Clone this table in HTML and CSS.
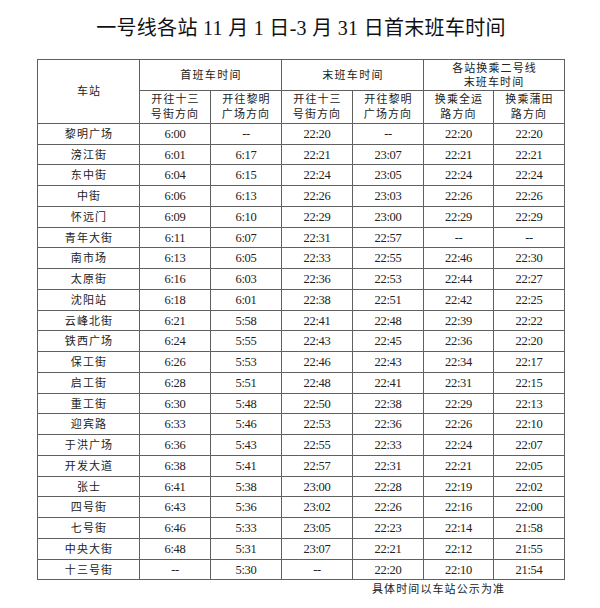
FILE: index.html
```html
<!DOCTYPE html>
<html lang="zh-CN">
<head>
<meta charset="utf-8">
<title>一号线各站首末班车时间</title>
<link rel="stylesheet" href="styles.css">
</head>
<body>
<div class="page">
  <div class="title">一号线各站 11 月 1 日-3 月 31 日首末班车时间</div>
  <table class="timetable">
    <colgroup>
      <col class="c-station"><col class="c-t"><col class="c-t"><col class="c-t"><col class="c-t"><col class="c-t6"><col class="c-t">
    </colgroup>
    <thead>
      <tr class="h1">
        <th rowspan="2" class="cjk">车站</th>
        <th colspan="2" class="cjk wide">首班车时间</th>
        <th colspan="2" class="cjk wide">末班车时间</th>
        <th colspan="2" class="cjk two">各站换乘二号线<br>末班车时间</th>
      </tr>
      <tr class="h2">
        <th class="cjk sub">开往十三<br>号街方向</th>
        <th class="cjk sub">开往黎明<br>广场方向</th>
        <th class="cjk sub">开往十三<br>号街方向</th>
        <th class="cjk sub">开往黎明<br>广场方向</th>
        <th class="cjk sub">换乘全运<br>路方向</th>
        <th class="cjk sub">换乘蒲田<br>路方向</th>
      </tr>
    </thead>
    <tbody>
      <tr><td class="cjk">黎明广场</td><td>6:00</td><td>--</td><td>22:20</td><td>--</td><td>22:20</td><td>22:20</td></tr>
      <tr><td class="cjk">滂江街</td><td>6:01</td><td>6:17</td><td>22:21</td><td>23:07</td><td>22:21</td><td>22:21</td></tr>
      <tr><td class="cjk">东中街</td><td>6:04</td><td>6:15</td><td>22:24</td><td>23:05</td><td>22:24</td><td>22:24</td></tr>
      <tr><td class="cjk">中街</td><td>6:06</td><td>6:13</td><td>22:26</td><td>23:03</td><td>22:26</td><td>22:26</td></tr>
      <tr><td class="cjk">怀远门</td><td>6:09</td><td>6:10</td><td>22:29</td><td>23:00</td><td>22:29</td><td>22:29</td></tr>
      <tr><td class="cjk">青年大街</td><td>6:11</td><td>6:07</td><td>22:31</td><td>22:57</td><td>--</td><td>--</td></tr>
      <tr><td class="cjk">南市场</td><td>6:13</td><td>6:05</td><td>22:33</td><td>22:55</td><td>22:46</td><td>22:30</td></tr>
      <tr><td class="cjk">太原街</td><td>6:16</td><td>6:03</td><td>22:36</td><td>22:53</td><td>22:44</td><td>22:27</td></tr>
      <tr><td class="cjk">沈阳站</td><td>6:18</td><td>6:01</td><td>22:38</td><td>22:51</td><td>22:42</td><td>22:25</td></tr>
      <tr><td class="cjk">云峰北街</td><td>6:21</td><td>5:58</td><td>22:41</td><td>22:48</td><td>22:39</td><td>22:22</td></tr>
      <tr><td class="cjk">铁西广场</td><td>6:24</td><td>5:55</td><td>22:43</td><td>22:45</td><td>22:36</td><td>22:20</td></tr>
      <tr><td class="cjk">保工街</td><td>6:26</td><td>5:53</td><td>22:46</td><td>22:43</td><td>22:34</td><td>22:17</td></tr>
      <tr><td class="cjk">启工街</td><td>6:28</td><td>5:51</td><td>22:48</td><td>22:41</td><td>22:31</td><td>22:15</td></tr>
      <tr><td class="cjk">重工街</td><td>6:30</td><td>5:48</td><td>22:50</td><td>22:38</td><td>22:29</td><td>22:13</td></tr>
      <tr><td class="cjk">迎宾路</td><td>6:33</td><td>5:46</td><td>22:53</td><td>22:36</td><td>22:26</td><td>22:10</td></tr>
      <tr><td class="cjk">于洪广场</td><td>6:36</td><td>5:43</td><td>22:55</td><td>22:33</td><td>22:24</td><td>22:07</td></tr>
      <tr><td class="cjk">开发大道</td><td>6:38</td><td>5:41</td><td>22:57</td><td>22:31</td><td>22:21</td><td>22:05</td></tr>
      <tr><td class="cjk">张士</td><td>6:41</td><td>5:38</td><td>23:00</td><td>22:28</td><td>22:19</td><td>22:02</td></tr>
      <tr><td class="cjk">四号街</td><td>6:43</td><td>5:36</td><td>23:02</td><td>22:26</td><td>22:16</td><td>22:00</td></tr>
      <tr><td class="cjk">七号街</td><td>6:46</td><td>5:33</td><td>23:05</td><td>22:23</td><td>22:14</td><td>21:58</td></tr>
      <tr><td class="cjk">中央大街</td><td>6:48</td><td>5:31</td><td>23:07</td><td>22:21</td><td>22:12</td><td>21:55</td></tr>
      <tr><td class="cjk">十三号街</td><td>--</td><td>5:30</td><td>--</td><td>22:20</td><td>22:10</td><td>21:54</td></tr>
    </tbody>
  </table>
  <div class="note">具体时间以车站公示为准</div>
</div>
</body>
</html>
```

FILE: styles.css
```css
html, body {
  margin: 0;
  padding: 0;
  background: #ffffff;
}

body {
  font-family: "Liberation Serif", "Noto Sans CJK SC", serif;
  color: #222222;
}

.page {
  width: 600px;
  height: 608px;
  overflow: hidden;
}

.title {
  margin-top: 16px;
  height: 24px;
  line-height: 24px;
  font-size: 20px;
  text-align: center;
  color: #111111;
  letter-spacing: 0.3px;
  padding-left: 2px;
}

.timetable {
  margin-top: 19px;
  margin-left: 37px;
  width: 527px;
  border-collapse: collapse;
  table-layout: fixed;
}

.c-station { width: 102px; }
.c-t { width: 71px; }
.c-t6 { width: 70px; }

.timetable th,
.timetable td {
  border: 1px solid #606060;
  padding: 0;
  text-align: center;
  vertical-align: middle;
  font-weight: normal;
  font-size: 12.5px;
  letter-spacing: -0.3px;
  line-height: 14px;
  white-space: nowrap;
}

.timetable .cjk {
  font-size: 11px;
  letter-spacing: 1.1px;
  text-indent: 1px;
}

.timetable .wide {
  letter-spacing: 1.3px;
}

.timetable .two {
  line-height: 14px;
}

.timetable .sub {
  line-height: 15.5px;
}

.h1 { height: 31.4px; }
.h2 { height: 32.6px; }

.timetable tbody tr {
  height: 20.76px;
}

.note {
  margin-left: 372px;
  margin-top: 2px;
  font-size: 11px;
  letter-spacing: 1.1px;
  line-height: 14px;
  color: #222222;
}
```
